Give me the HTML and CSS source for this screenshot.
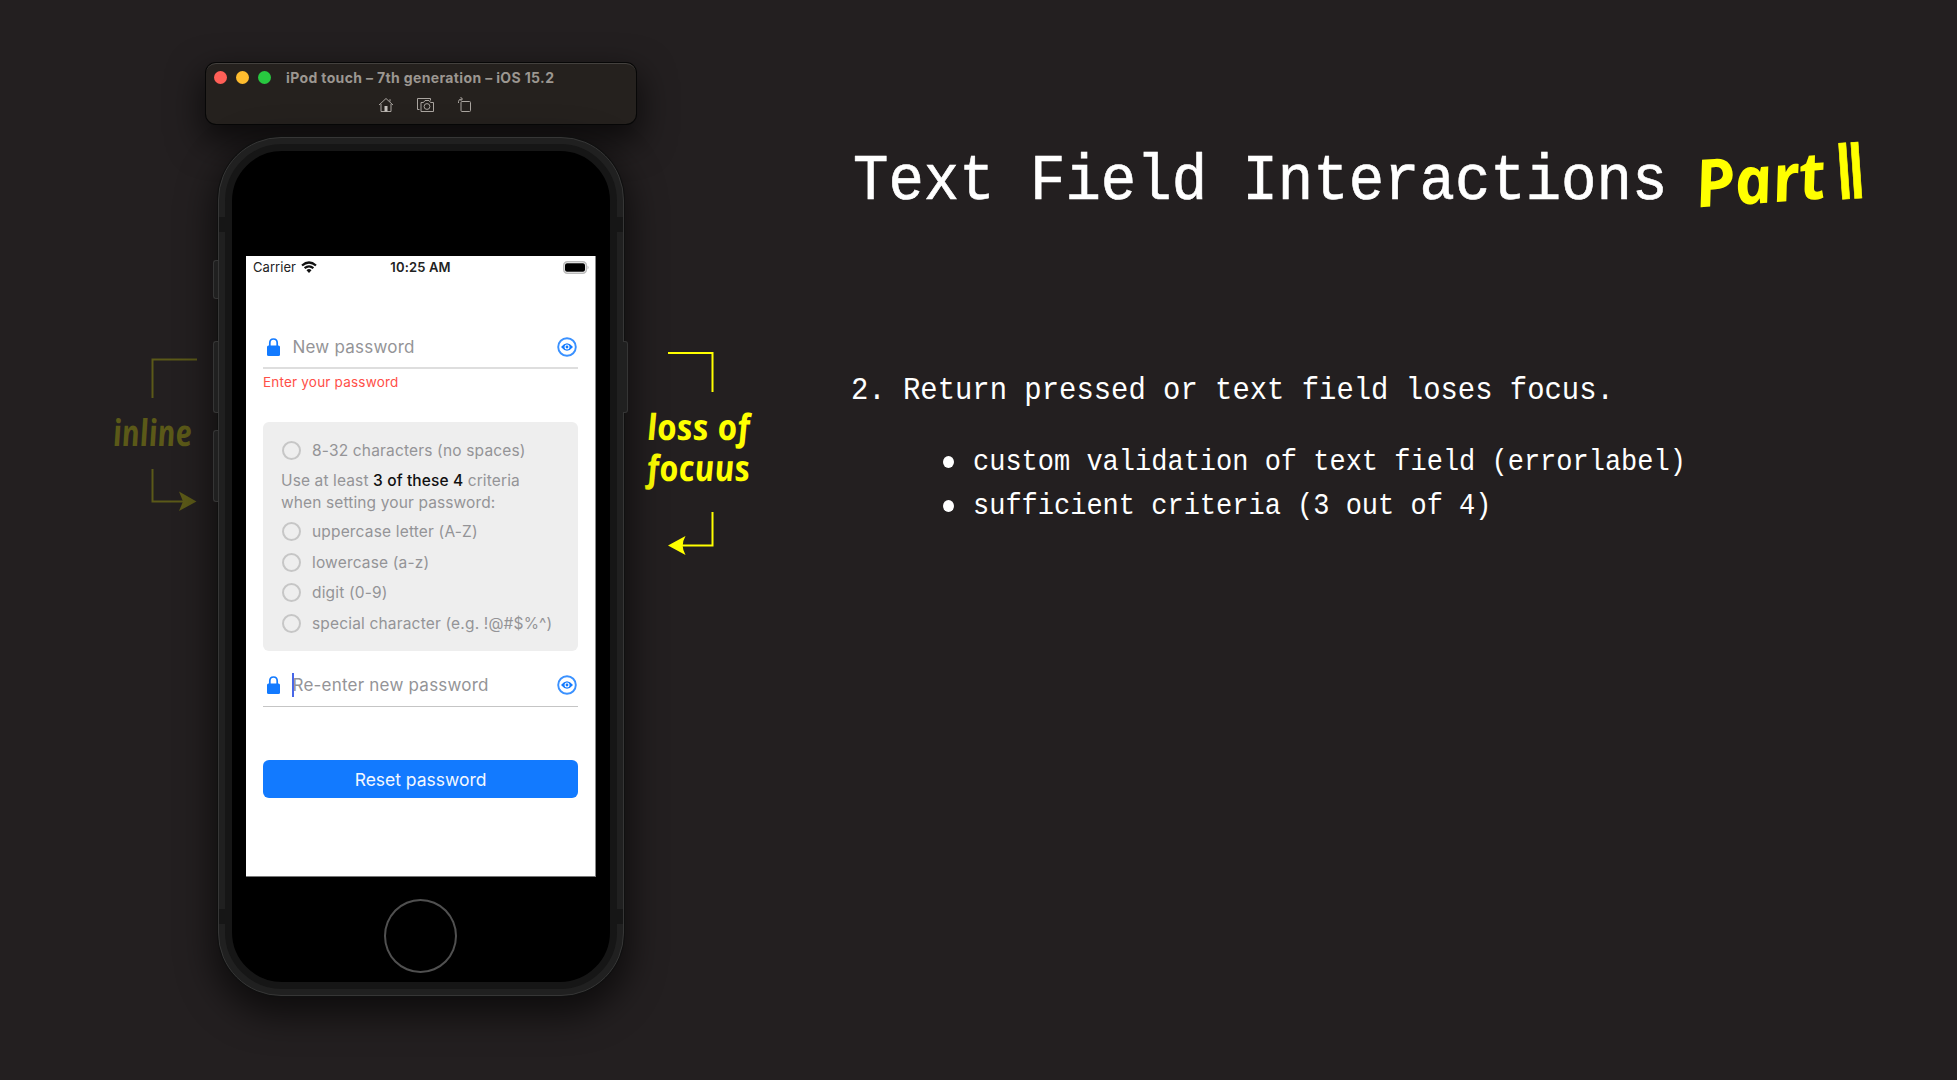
FILE: index.html
```html
<!DOCTYPE html>
<html lang="en">
<head>
<meta charset="utf-8">
<title>Text Field Interactions</title>
<link rel="stylesheet" href="styles.css">
</head>
<body>
<main class="slide">
  <aside class="note note-inline">
    <svg width="84" height="160" viewBox="0 0 84 160">
      <path class="wire" d="M84 4.500H39.500V43M39.500 114V146.500H72"/>
      <path class="tip" d="M66 136.5L83.500 146.500L66 156L70 146.500Z"/>
      <text class="hand" transform="translate(1 91) skewX(6)" font-size="37" textLength="79" lengthAdjust="spacingAndGlyphs">inline</text>
    </svg>
  </aside>

  <section class="simulator">
    <header class="titlebar">
      <div class="title-row">
        <i class="dot red"></i><i class="dot amber"></i><i class="dot green"></i>
        <span class="device-name">iPod touch – 7th generation – iOS 15.2</span>
      </div>
      <div class="tools">
        <svg width="16" height="16" viewBox="0 0 16 16"><path d="M1 8L8 1.500L15 8M3 7V14.500H13V7M12 4.500V2.200"/><path class="solid" d="M6.500 9H9.500V14.500H6.500Z"/></svg>
        <svg width="19" height="16" viewBox="0 0 19 16"><path d="M3.500 12.500H1.500V1.500H14.500V3.500M5 5.500H7.500L9 3.500H13L14.500 5.500H17.500V14.500H5Z"/><circle cx="11" cy="9.500" r="2.900"/></svg>
        <svg width="15" height="16" viewBox="0 0 15 16"><rect x="4" y="4.500" width="9.500" height="10" rx="1"/><path d="M1.500 6V4.500Q1.500 2 5 2M3.500 0L5.500 2L3.500 4"/></svg>
      </div>
    </header>

    <div class="phone">
      <i class="key mute"></i><i class="key vol-up"></i><i class="key vol-down"></i><i class="key power"></i>
      <i class="band tl"></i><i class="band tr"></i><i class="band bl"></i><i class="band br"></i>
      <div class="glass">
        <div class="screen">
          <div class="status">
            <span class="carrier">Carrier
              <svg width="16" height="12" viewBox="0 0 16 12"><path d="M1 4.500Q8-1.500 15 4.500M3.600 7.200Q8 3.400 12.400 7.200"/><path class="fill" d="M5.500 9.200Q8 7 10.500 9.200L8 12Z"/></svg>
            </span>
            <span class="clock">10:25 AM</span>
            <svg class="battery" width="27" height="13" viewBox="0 0 27 13"><rect x=".8" y=".8" width="22.500" height="11.400" rx="3.500"/><path class="nub" d="M24.500 4.500Q26.800 6.500 24.500 8.500Z"/><rect class="charge" x="2" y="2.200" width="20" height="8.600" rx="2"/></svg>
          </div>

          <div class="field first">
            <svg class="lock" width="13" height="18" viewBox="0 0 13 18"><rect x="0" y="7.500" width="13" height="10.500" rx="1.500"/><path d="M2.800 8V5Q2.800 1 6.500 1T10.200 5V8"/></svg>
            <span class="placeholder">New password</span>
            <svg class="eye" width="20" height="20" viewBox="0 0 20 20"><circle cx="10" cy="10" r="8.800"/><path d="M4 10Q10 2.600 16 10Q10 17.400 4 10Z"/><circle class="iris" cx="10" cy="10" r="2.500"/><circle class="pupil" cx="10" cy="10" r="1.400"/></svg>
          </div>
          <p class="error">Enter your password</p>

          <div class="criteria">
            <div class="item">8-32 characters (no spaces)</div>
            <p class="hint"><span>Use at least <b>3 of these 4</b> criteria</span><br>when setting your password:</p>
            <div class="item">uppercase letter (A-Z)</div>
            <div class="item">lowercase (a-z)</div>
            <div class="item">digit (0-9)</div>
            <div class="item">special character (e.g. !@#$%^)</div>
          </div>

          <div class="field second">
            <svg class="lock" width="13" height="18" viewBox="0 0 13 18"><rect x="0" y="7.500" width="13" height="10.500" rx="1.500"/><path d="M2.800 8V5Q2.800 1 6.500 1T10.200 5V8"/></svg>
            <span class="placeholder caret">Re-enter new password</span>
            <svg class="eye" width="20" height="20" viewBox="0 0 20 20"><circle cx="10" cy="10" r="8.800"/><path d="M4 10Q10 2.600 16 10Q10 17.400 4 10Z"/><circle class="iris" cx="10" cy="10" r="2.500"/><circle class="pupil" cx="10" cy="10" r="1.400"/></svg>
          </div>
          <button class="reset">Reset password</button>
        </div>
        <div class="home"></div>
      </div>
    </div>
  </section>

  <aside class="note note-loss">
    <svg width="110" height="210" viewBox="0 0 110 210">
      <path class="wire" d="M22 3H66.500V42M66.500 162V195.500H34"/>
      <path class="tip" d="M22 195.500L39.500 186Q34 195.500 39.500 205Z"/>
      <text class="hand" transform="translate(2 90) skewX(6)" font-size="36" textLength="103" lengthAdjust="spacingAndGlyphs">loss of</text>
      <text class="hand" transform="translate(2 131) skewX(6)" font-size="36" textLength="103" lengthAdjust="spacingAndGlyphs">focuus</text>
    </svg>
  </aside>

  <section class="copy">
    <div class="heading">
      <h1>Text Field Interactions</h1>
      <svg class="part" width="180" height="90" viewBox="0 0 180 90">
        <g transform="rotate(-4 10 70)">
          <text class="hand" transform="translate(5 70) skewX(6)" font-size="66" textLength="130" lengthAdjust="spacingAndGlyphs">Part</text>
          <text class="numeral" x="142" y="72" font-size="77">II</text>
        </g>
      </svg>
    </div>
    <p class="step"><span>2. Return pressed or text field loses focus.</span></p>
    <ul class="points">
      <li><span>custom validation of text field (errorlabel)</span></li>
      <li><span>sufficient criteria (3 out of 4)</span></li>
    </ul>
  </section>
</main>
</body>
</html>
```
FILE: styles.css
```css
*, *::before { box-sizing: border-box; }
body { margin: 0; background: #231f20; font-family: Inter, "Liberation Sans", sans-serif; }
svg { display: block; flex: none; overflow: visible; }
p, h1, ul { margin: 0; padding: 0; }
.slide { display: flex; align-items: flex-start; width: 1957px; height: 1080px; overflow: hidden; }

/* Hand-lettered notes */
.note { flex: none; color: #ff0; }
.note-inline { width: 93px; margin: 355px 0 0 113px; color: #5b5918; }
.note-loss { width: 110px; margin: 350px 0 0 10px; }
.wire { fill: none; stroke: currentColor; stroke-width: 2; }
.tip { fill: currentColor; }
.hand { fill: currentColor; font-family: "Open Sans", "Noto Sans", sans-serif; font-style: italic; font-weight: 700; }
.numeral { fill: currentColor; font-family: Inter, sans-serif; font-weight: 400; letter-spacing: -8.500px; stroke: currentColor; stroke-width: .6px; }

/* Simulator window */
.simulator { flex: none; width: 430px; padding-top: 63px; display: flex; flex-direction: column; align-items: flex-start; }
.titlebar { width: 430px; height: 61px; background: #25211e; border-radius: 10px; border-top: 1px solid #44413e; box-shadow: 0 0 0 1px #070707, 0 14px 34px 4px rgba(0,0,0,.62); }
.title-row { display: flex; align-items: center; height: 27px; padding-left: 8px; }
.dot { width: 13px; height: 13px; border-radius: 50%; margin-right: 9px; }
.red { background: #ff5f57; }
.amber { background: #febc2e; }
.green { background: #28c840; }
.device-name { margin-left: 6px; color: #9c9791; font-size: 14px; font-weight: 700; letter-spacing: .36px; white-space: nowrap; }
.tools { display: flex; justify-content: center; gap: 22px; padding: 6px 0 0 8px; }
.tools svg { fill: none; stroke: #aaa5a0; stroke-width: 1; }
.tools .solid { fill: #c5c1bd; stroke: none; }

.phone { position: relative; margin: 13px 0 0 12px; width: 406px; height: 859px; padding: 6px; background: #202020; border: 1px solid #363636; border-radius: 63px; box-shadow: 0 0 0 1px #101010, 0 14px 34px 6px rgba(0,0,0,.58); }
.glass { height: 100%; display: flex; flex-direction: column; align-items: center; background: #000; border: 7px solid #161616; border-radius: 57px; padding-top: 105px; }
.key { position: absolute; left: -6px; width: 5px; height: 72px; background: #202020; border: 1px solid #353535; border-right: 0; border-radius: 3px 0 0 3px; }
.mute { top: 122px; height: 39px; }
.vol-up { top: 203px; }
.vol-down { top: 292px; }
.power { left: auto; right: -5px; top: 203px; transform: scaleX(-1); }
.band { position: absolute; width: 6px; height: 15px; background: #161616; }
.tl { left: 0; top: 79px; } .tr { right: 0; top: 79px; }
.bl { left: 0; bottom: 71px; } .br { right: 0; bottom: 71px; }
.home { margin: 22px 1px 0 0; width: 73px; height: 74px; border: 2px solid #505050; border-radius: 50%; }

/* App screen */
.screen { width: 350px; height: 621px; background: #fff; padding: 0 17px; border-right: 1px solid #888; border-bottom: 1px solid #777; }
.status { display: grid; grid-template-columns: 1fr auto 1fr; align-items: center; height: 22px; margin: 0 -12px 0 -10px; font-size: 13px; color: #222; }
.carrier { display: flex; align-items: center; gap: 5px; letter-spacing: .05px; }
.carrier svg { fill: none; stroke: #111; stroke-width: 2.200; }
.carrier .fill { fill: #111; stroke: none; }
.clock { margin-left: -2px; font-weight: 600; letter-spacing: .15px; }
.battery { justify-self: end; fill: none; stroke: #bbb; stroke-width: 1.500; }
.battery .nub { fill: #bbb; stroke: none; }
.battery .charge { fill: #000; stroke: none; }
.field { display: flex; align-items: center; height: 43px; padding: 0 1px 0 4px; color: #949497; font-size: 17px; }
.first { margin-top: 48px; border-bottom: 2px solid #dedede; }
.second { margin-top: 13px; border-bottom: 1px solid #c5c5c5; }
.lock { fill: #127aff; }
.lock path { fill: none; stroke: #127aff; stroke-width: 1.700; }
.placeholder { position: relative; flex: 1; margin-left: 12.500px; white-space: nowrap; letter-spacing: .22px; }
.caret::before { content: ""; position: absolute; left: -.500px; top: -2px; width: 2px; height: 24px; background: #4867e8; }
.eye { fill: #127aff; }
.eye > circle:first-child { fill: none; stroke: #3a91ff; stroke-width: 1.900; }
.eye .iris { fill: #fff; }
.eye .pupil { fill: #127aff; }
.error { margin-top: 5px; height: 17px; color: #ff4f48; font-size: 13.500px; line-height: 17px; letter-spacing: .2px; white-space: nowrap; }
.criteria { margin-top: 31px; height: 229px; padding: 18px 0 0 18px; background: #eee; border-radius: 6px; color: #949497; font-size: 15.500px; letter-spacing: .17px; white-space: nowrap; }
.item { display: flex; align-items: center; gap: 11px; height: 20px; margin-bottom: 10.500px; }
.item::before { content: ""; flex: none; width: 19px; height: 19px; margin-left: 1px; border: 2px solid #c6c6c6; border-radius: 50%; }
.hint { line-height: 22px; margin: -1px 0 8px; letter-spacing: .12px; }
.hint b { color: #111; font-weight: 500; }
.reset { display: block; width: 100%; height: 38px; margin-top: 53px; padding: 0; border: 0; border-radius: 6px; background: #127aff; color: #f3f8ff; font: 400 17.500px Inter, sans-serif; letter-spacing: -.02px; }

/* Slide copy */
.copy { flex: none; margin-left: 95px; padding-top: 137px; color: #fff; font-family: "Liberation Mono", monospace; }
.heading { display: flex; height: 90px; padding-left: 2px; }
h1 { font-size: 59px; font-weight: 400; line-height: 90px; white-space: nowrap; transform: scaleY(1.1); -webkit-text-stroke: .6px #fff; }
.part { margin-left: 27px; color: #ff0; }
.step { margin-top: 144px; height: 40px; font-size: 28.900px; line-height: 40px; white-space: nowrap; }
.step span, .points span { display: inline-block; transform: scaleY(1.1); }
.points { list-style: none; margin: 29px 0 0 92px; }
.points li { display: flex; align-items: center; gap: 19px; height: 44px; font-size: 27px; line-height: 40px; white-space: nowrap; }
.points li::before { content: ""; width: 11px; height: 12px; border-radius: 50%; background: #fff; }
```
